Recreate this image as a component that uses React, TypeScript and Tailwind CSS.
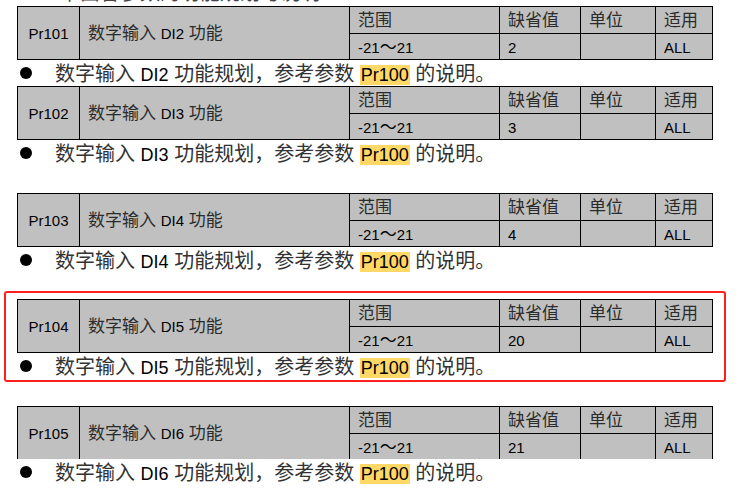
import React from 'react';

// Latin runs are set smaller so Liberation Sans matches the narrow Calibri look
function L({ children, size = 'cell' }: { children: React.ReactNode; size?: 'cell' | 'body' }) {
  return (
    <span className={size === 'cell' ? 'text-[15px] text-black' : 'text-[18px] text-black'}>
      {children}
    </span>
  );
}

interface ParamTableProps {
  code: string;
  di: string;
  def: string;
  open?: boolean;
}

function ParamTable({ code, di, def, open }: ParamTableProps) {
  return (
    <div
      className={`grid w-[696px] grid-cols-[61px_269px_149px_80px_74px_56px] grid-rows-[26px_25px] gap-px bg-black ${
        open ? 'px-px pt-px' : 'p-px'
      }`}
    >
      <div className="row-span-2 flex items-center justify-center bg-[#c0c0c0] text-[15px] leading-none text-black">
        {code}
      </div>
      <div className="row-span-2 flex items-center whitespace-pre bg-[#c0c0c0] pl-[8px] pt-px text-[17px] leading-none text-[#2b2b2b]">
        数字输入 <L>DI{di}</L> 功能
      </div>

      {/* 表头 */}
      <div className="flex items-center bg-[#c0c0c0] pl-[8px] text-[17px] leading-none text-[#2b2b2b]">范围</div>
      <div className="flex items-center bg-[#c0c0c0] pl-[8px] text-[17px] leading-none text-[#2b2b2b]">缺省值</div>
      <div className="flex items-center bg-[#c0c0c0] pl-[8px] text-[17px] leading-none text-[#2b2b2b]">单位</div>
      <div className="flex items-center bg-[#c0c0c0] pl-[8px] text-[17px] leading-none text-[#2b2b2b]">适用</div>

      {/* 数值 */}
      <div className="flex items-center bg-[#c0c0c0] pl-[8px] pt-[2px] text-[17px] leading-none text-black">
        <L>-21</L>～<L>21</L>
      </div>
      <div className="flex items-center bg-[#c0c0c0] pl-[8px] pt-[2px] text-[15px] leading-none text-black">{def}</div>
      <div className="bg-[#c0c0c0]" />
      <div className="flex items-center bg-[#c0c0c0] pl-[8px] pt-[2px] text-[15px] leading-none text-black">ALL</div>
    </div>
  );
}

function BulletLine({ di }: { di: string }) {
  return (
    <div className="flex h-[26px] items-center">
      <div className="ml-[3px] h-[12px] w-[12px] rounded-full bg-black" />
      <div className="ml-[23px] whitespace-nowrap pt-[2px] text-[20px] leading-none text-[#333]">
        数字输入 <L size="body">DI{di}</L> 功能规划，参考参数{' '}
        <span className="bg-[#ffd866] px-px text-[18px] text-black">Pr100</span> 的说明。
      </div>
    </div>
  );
}

export default function App() {
  return (
    <div className="h-[493px] w-[755px] overflow-hidden bg-white font-['Liberation_Sans','Noto_Sans_CJK_SC',sans-serif]">
      {/* 上一页残留的一行，只露出底部 */}
      <div className="h-[6px] overflow-hidden pl-[60px]">
        <div className="-mt-[17px] whitespace-nowrap text-[20px] leading-[20px] text-[#444]">
          下面各参数的功能规划与说明：
        </div>
      </div>

      <div className="pl-[17px]">
        <ParamTable code="Pr101" di="2" def="2" />
        <BulletLine di="2" />
        <ParamTable code="Pr102" di="3" def="3" />
        <BulletLine di="3" />
      </div>

      <div className="h-[27px]" />

      <div className="pl-[17px]">
        <ParamTable code="Pr103" di="4" def="4" />
        <BulletLine di="4" />
      </div>

      <div className="h-[18px]" />

      <div className="ml-[4px] w-[722px] rounded-[3px] border-2 border-[#ff1f1f] pb-px pl-[11px] pt-[6px]">
        <ParamTable code="Pr104" di="5" def="20" />
        <BulletLine di="5" />
      </div>

      <div className="h-[24px]" />

      <div className="pl-[17px]">
        <ParamTable code="Pr105" di="6" def="21" open />
        <BulletLine di="6" />
      </div>
    </div>
  );
}
